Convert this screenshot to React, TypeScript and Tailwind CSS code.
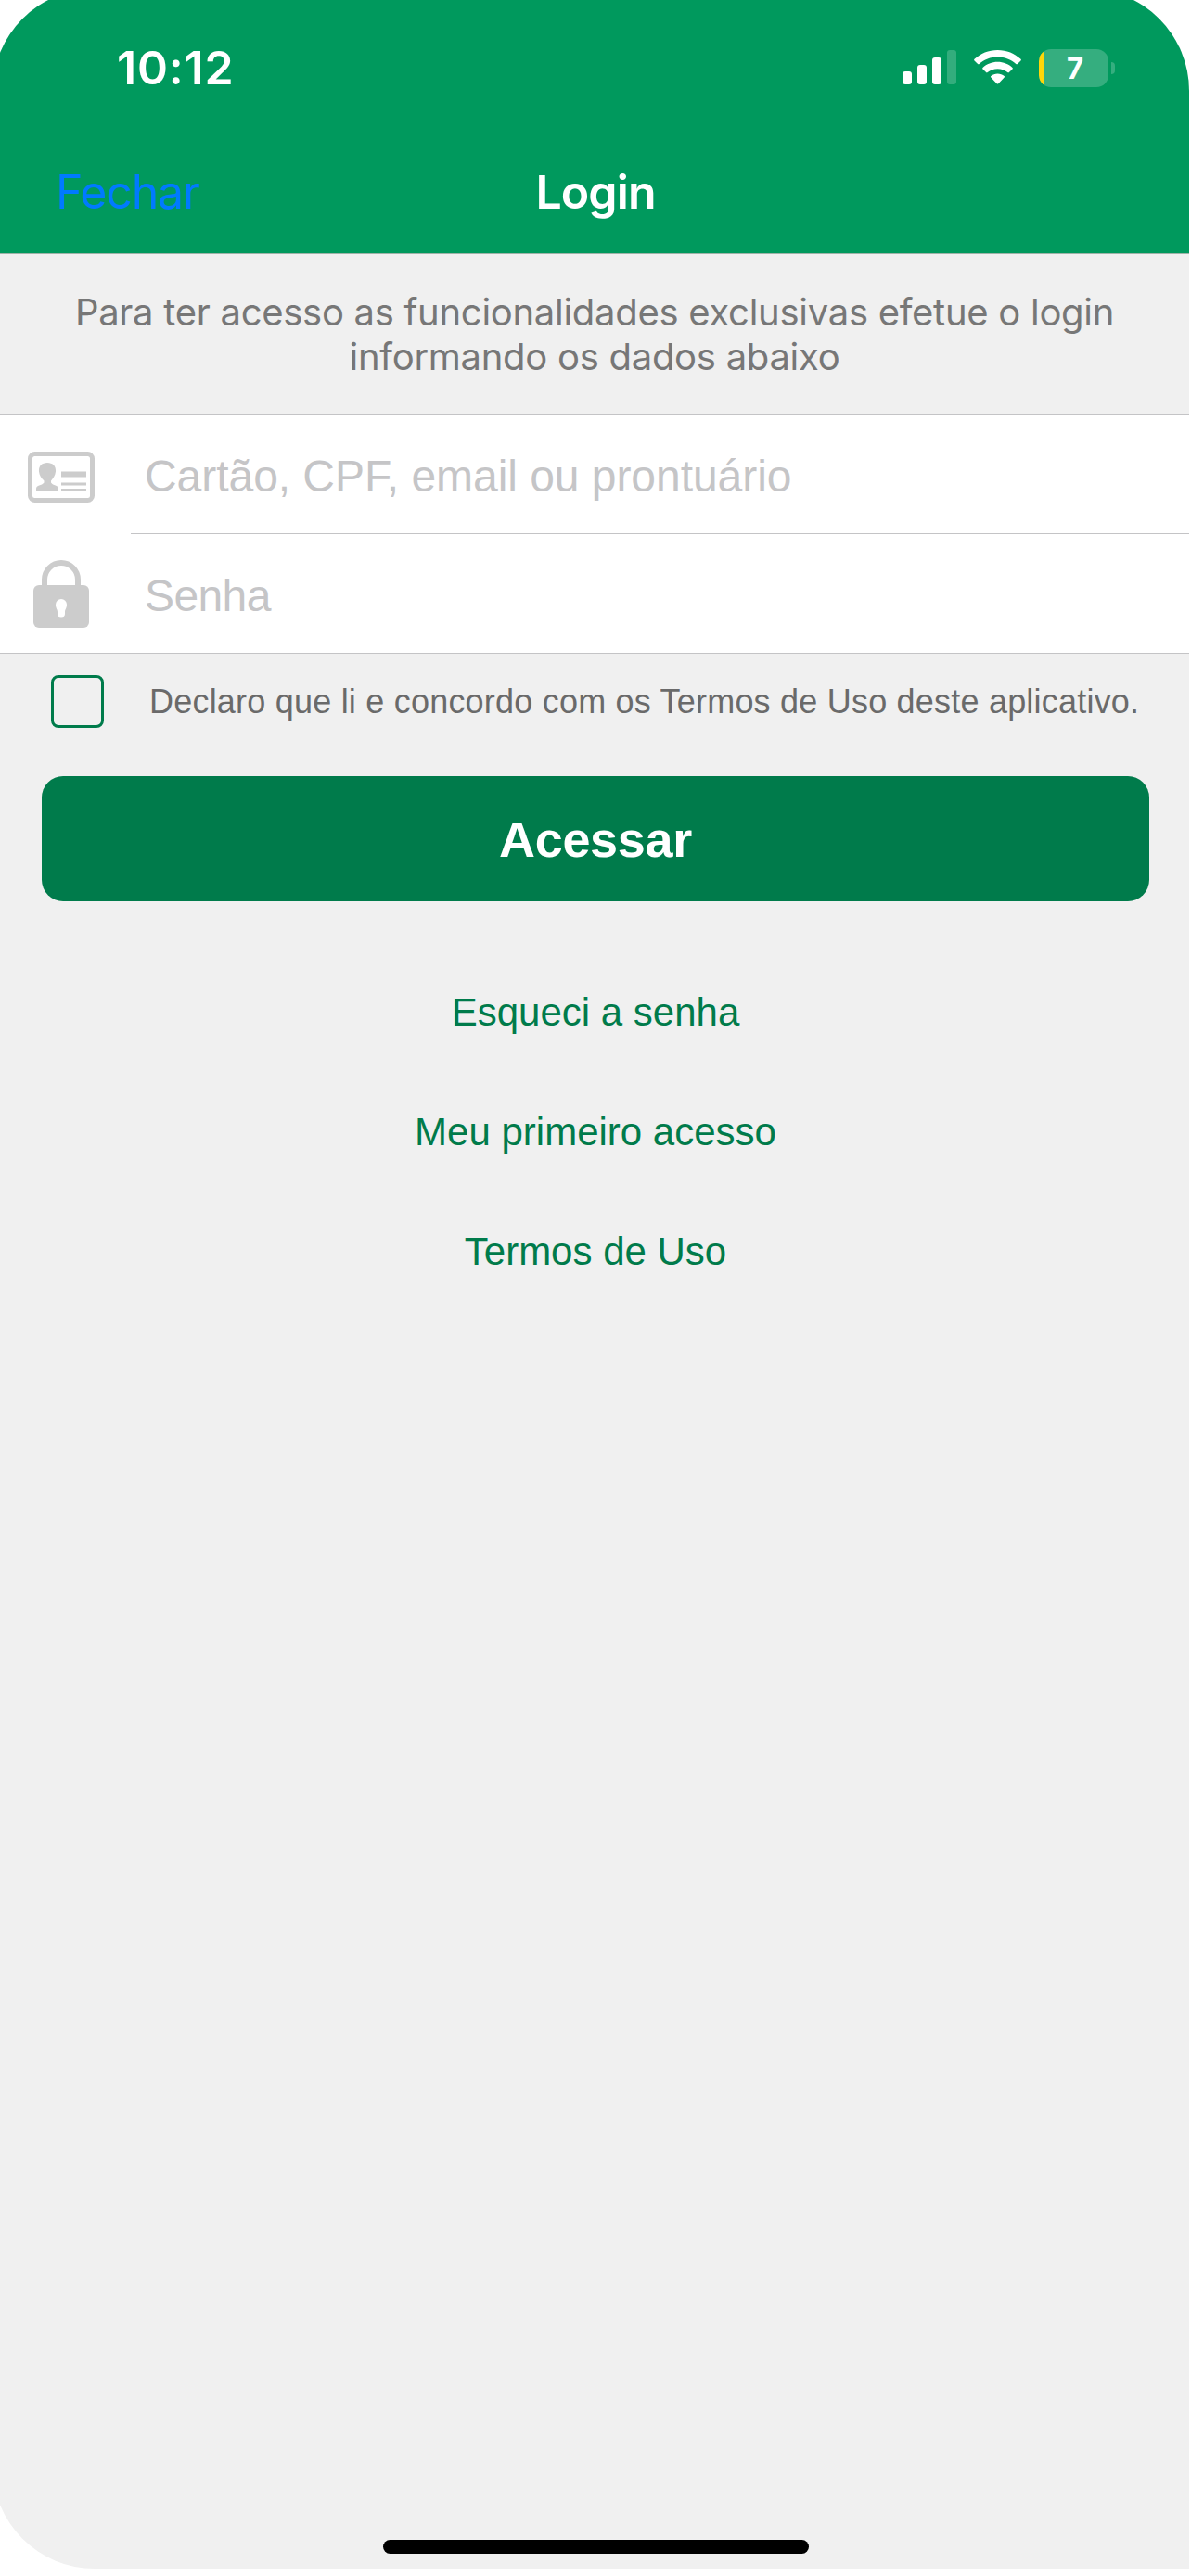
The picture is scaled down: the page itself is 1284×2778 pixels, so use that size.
import React from "react";

const links = ["Esqueci a senha", "Meu primeiro acesso", "Termos de Uso"];

function SignalIcon() {
  return (
    <svg width="58" height="38" viewBox="0 0 58 38" fill="#fff">
      <rect x="0" y="23" width="10" height="14" rx="3" />
      <rect x="16" y="16" width="10" height="21" rx="3" />
      <rect x="32" y="8" width="10" height="29" rx="3" />
      <rect x="48" y="0" width="10" height="37" rx="3" opacity="0.2" />
    </svg>
  );
}

function WifiIcon() {
  return (
    <svg width="51" height="38" viewBox="0 0 51 38" fill="#fff">
      <path d="M25.5 0C35.200 0 44 3.700 50.500 9.800Q51.300 10.600 50.500 11.400L46.900 15Q46.100 15.700 45.300 15C40 10.200 33.100 7.600 25.500 7.600S11 10.200 5.700 15Q4.900 15.700 4.100 15L.5 11.400Q-.3 10.600 .5 9.800C7 3.700 15.800 0 25.500 0Z" />
      <path d="M25.500 12.700C31.700 12.700 37.300 15 41.500 18.900Q42.300 19.700 41.500 20.500L37.900 24.100Q37.100 24.800 36.300 24.100C33.400 21.600 29.600 20.200 25.500 20.200S17.600 21.600 14.700 24.100Q13.900 24.800 13.100 24.100L9.500 20.500Q8.700 19.700 9.500 18.900C13.700 15 19.300 12.700 25.500 12.700Z" />
      <path d="M25.500 25.400C28.300 25.400 30.700 26.400 32.700 28.100Q33.400 28.800 32.700 29.500L26.300 36.200Q25.500 37 24.700 36.200L18.300 29.500Q17.600 28.800 18.300 28.100C20.300 26.400 22.700 25.400 25.500 25.400Z" />
    </svg>
  );
}

function Battery() {
  return (
    <div className="flex items-center gap-[3px]">
      <div className="relative flex h-[41px] w-[75px] items-center justify-center overflow-hidden rounded-[13px] bg-[#35ae7f]">
        <svg className="absolute left-0 top-[2px]" width="5" height="37" viewBox="0 0 5 37">
          <path d="M5 0Q0 3 0 11V26Q0 34 5 37Z" fill="#ffd60a" />
        </svg>
        <span className="pl-[3px] text-[31px] leading-none font-bold text-white">7</span>
      </div>
      <div className="h-[13px] w-[4px] rounded-r-full bg-[#35ae7f]" />
    </div>
  );
}

function CardIcon() {
  return (
    <svg className="mt-[6px]" width="72" height="55" viewBox="0 0 72 55" fill="#ccc">
      <rect x="2.500" y="2.500" width="67" height="50" rx="5" fill="none" stroke="#ccc" strokeWidth="5" />
      <path d="M21 12C27 12 30.500 16 30 21.500C29.700 26 27 29 25 31.500V33.500C27 37 33 36 33 40V43H9V40C9 36 15 37 17.500 33.500V31.500C15 29 12.300 26 12 21.500C11.500 16 15 12 21 12Z" />
      <rect x="36" y="21.500" width="27" height="6" />
      <rect x="36" y="33.500" width="27" height="3" />
      <rect x="36" y="40" width="27" height="3" />
    </svg>
  );
}

function LockIcon() {
  return (
    <svg width="60" height="73" viewBox="0 0 60 73">
      <path d="M12 30V21a18 18 0 0 1 36 0V30" fill="none" stroke="#ccc" strokeWidth="6" />
      <rect y="27" width="60" height="46" rx="6" fill="#ccc" />
      <path d="M30 42a6 6 0 0 1 6 6c0 4-2 5-2 8v2a4 3.500 0 0 1-8 0v-2c0-3-2-4-2-8a6 6 0 0 1 6-6Z" fill="#fff" />
    </svg>
  );
}

export default function App() {
  return (
    <div className="flex h-[2778px] w-[1284px] overflow-hidden bg-white font-['Liberation_Sans',sans-serif]">
      <div className="-mt-[12px] -ml-[8px] flex h-[2782px] w-[1290px] shrink-0 flex-col overflow-hidden rounded-t-[110px] rounded-bl-[110px] bg-[#f0f0f0] pl-[8px]">
        <header className="-ml-[8px] border-b border-[#9fb3a9] bg-[#00995d] pt-[12px] pl-[8px] font-['Inter',sans-serif]">
          <div className="flex h-[146px] items-center justify-between pr-[80px] pl-[126px]">
            <span className="text-[50px] leading-none font-semibold tracking-[0.8px] text-white">10:12</span>
            <div className="flex items-center">
              <SignalIcon />
              <div className="mr-[19px] ml-[19px]">
                <WifiIcon />
              </div>
              <Battery />
            </div>
          </div>
          <div className="grid h-[127px] grid-cols-3 items-center pr-[58px] pb-[5px] pl-[60px] text-[50px] leading-none">
            <a className="tracking-[-1.2px] text-[#007aff]">Fechar</a>
            <h1 className="text-center font-semibold tracking-[-0.9px] text-white">Login</h1>
          </div>
        </header>

        <p className="h-[173px] pt-[39px] text-center font-['Inter',sans-serif] text-[40px] leading-[48px] tracking-[-0.28px] text-[#777]">
          Para ter acesso as funcionalidades exclusivas efetue o login
          <br />
          informando os dados abaixo
        </p>

        <div className="border-y border-[#c4c4c6] bg-white text-[48px] leading-none text-[#c5c5c7]">
          <label className="flex h-[127px] items-center pl-[30px]">
            <CardIcon />
            <span className="pt-[5px] pl-[54px] tracking-[-0.05px]">Cartão, CPF, email ou prontuário</span>
          </label>
          <div className="ml-[141px] h-px bg-[#c4c4c6]" />
          <label className="flex h-[128px] items-center pl-[36px]">
            <LockIcon />
            <span className="pt-[5px] pl-[60px] tracking-[-0.6px]">Senha</span>
          </label>
        </div>

        <label className="mt-[23px] flex items-center pl-[55px]">
          <span className="size-[57px] rounded-[8px] border-3 border-[#007b4b]" />
          <span className="pt-[1px] pl-[49px] text-[36px] leading-none tracking-[0.21px] whitespace-nowrap text-[#6a6a6a]">
            Declaro que li e concordo com os Termos de Uso deste aplicativo.
          </span>
        </label>

        <button className="mt-[52px] mr-[43px] ml-[45px] h-[135px] rounded-[23px] bg-[#007b4b] text-[54px] leading-none font-bold tracking-[-0.3px] text-white">
          Acessar
        </button>

        <nav className="mt-[55px] -mr-[2px] flex flex-col text-center text-[42px] leading-[129px] text-[#007b4b]">
          {links.map((link) => (
            <a key={link}>{link}</a>
          ))}
        </nav>

        <div className="mt-auto mb-[16px] ml-[413px] h-[15px] w-[459px] rounded-full bg-black" />
      </div>
    </div>
  );
}
